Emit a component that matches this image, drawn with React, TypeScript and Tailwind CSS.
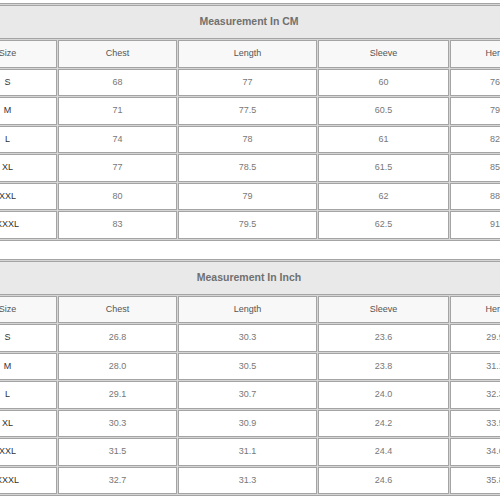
const columns = ['Size', 'Chest', 'Length', 'Sleeve', 'Hem']

const cmRows = [
  ['S', '68', '77', '60', '76'],
  ['M', '71', '77.5', '60.5', '79'],
  ['L', '74', '78', '61', '82'],
  ['XL', '77', '78.5', '61.5', '85'],
  ['XXL', '80', '79', '62', '88'],
  ['XXXL', '83', '79.5', '62.5', '91'],
]

const inchRows = [
  ['S', '26.8', '30.3', '23.6', '29.9'],
  ['M', '28.0', '30.5', '23.8', '31.1'],
  ['L', '29.1', '30.7', '24.0', '32.3'],
  ['XL', '30.3', '30.9', '24.2', '33.5'],
  ['XXL', '31.5', '31.1', '24.4', '34.6'],
  ['XXXL', '32.7', '31.3', '24.6', '35.8'],
]

function SizeTable({ title, rows }: { title: string; rows: string[][] }) {
  return (
    <div className="-ml-[44px] grid w-max grid-cols-[99px_119px_139px_131px_90px] gap-px border border-[#a4a4a4] bg-[#d6d6d6] p-px">
      <div className="col-span-5 flex h-[34px] items-center justify-center border border-[#a4a4a4] bg-[#e9e9e9] text-[10.5px] font-bold text-[#707070]">
        {title}
      </div>
      {columns.map((col) => (
        <div
          key={col}
          className="flex h-[27.5px] items-center justify-center border border-[#a4a4a4] bg-[#f8f8f8] text-[9px] text-[#555]"
        >
          {col}
        </div>
      ))}
      {rows.map((row) =>
        row.map((cell, i) => (
          <div
            key={row[0] + i}
            className={
              i === 0
                ? 'flex h-[27.5px] items-center justify-center border border-[#a4a4a4] bg-white text-[9px] text-[#333]'
                : 'flex h-[27.5px] items-center justify-center border border-[#a4a4a4] bg-white text-[9px] text-[#777]'
            }
          >
            {cell}
          </div>
        )),
      )}
    </div>
  )
}

export default function App() {
  return (
    <div
      className="h-[500px] w-[500px] overflow-hidden bg-white pt-[3px]"
      style={{ fontFamily: '"Liberation Sans", Arial, sans-serif' }}
    >
      <SizeTable title="Measurement In CM" rows={cmRows} />
      <div className="mt-[18px]">
        <SizeTable title="Measurement In Inch" rows={inchRows} />
      </div>
    </div>
  )
}
